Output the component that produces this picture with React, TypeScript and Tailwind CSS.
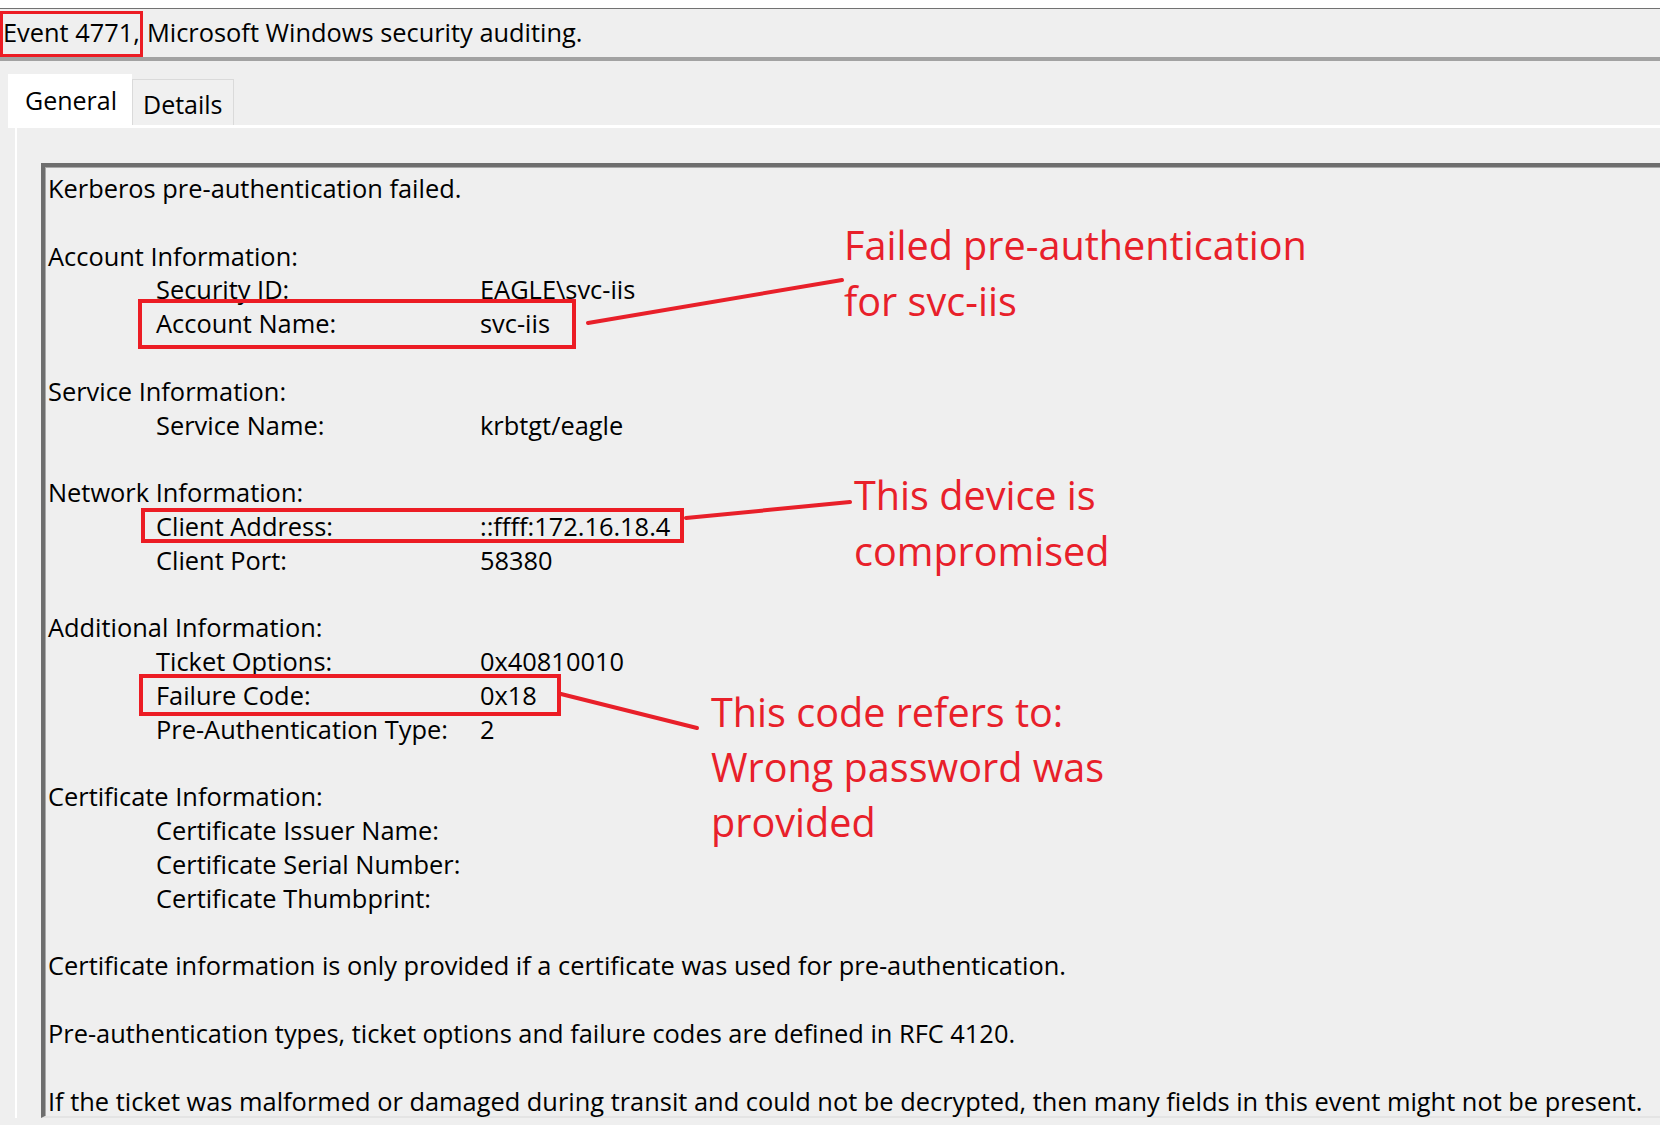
const red = '#ec1c24';

type Row = { label: string; value?: string };
type Section = { title: string; rows: Row[] };

const sections: Section[] = [
  { title: 'Account Information:', rows: [{ label: 'Security ID:', value: 'EAGLE\\svc-iis' }, { label: 'Account Name:', value: 'svc-iis' }] },
  { title: 'Service Information:', rows: [{ label: 'Service Name:', value: 'krbtgt/eagle' }] },
  { title: 'Network Information:', rows: [{ label: 'Client Address:', value: '::ffff:172.16.18.4' }, { label: 'Client Port:', value: '58380' }] },
  {
    title: 'Additional Information:',
    rows: [
      { label: 'Ticket Options:', value: '0x40810010' },
      { label: 'Failure Code:', value: '0x18' },
      { label: 'Pre-Authentication Type:', value: '2' },
    ],
  },
  {
    title: 'Certificate Information:',
    rows: [{ label: 'Certificate Issuer Name:' }, { label: 'Certificate Serial Number:' }, { label: 'Certificate Thumbprint:' }],
  },
];

const notes = [
  'Certificate information is only provided if a certificate was used for pre-authentication.',
  'Pre-authentication types, ticket options and failure codes are defined in RFC 4120.',
  'If the ticket was malformed or damaged during transit and could not be decrypted, then many fields in this event might not be present.',
];

function Line({ children }: { children?: React.ReactNode }) {
  return <div className="h-[33.8px] leading-[33.8px] whitespace-nowrap">{children}</div>;
}

function Annotations() {
  return (
    <div className="absolute inset-0 pointer-events-none">
      <svg className="absolute inset-0" width="1660" height="1125">
        <g stroke="#e8202a" strokeWidth="4" strokeLinecap="round">
          <line x1="588" y1="323" x2="842" y2="280" />
          <line x1="686" y1="518" x2="850" y2="502" />
          <line x1="561" y1="694" x2="697" y2="728" />
        </g>
      </svg>
      <div className="absolute left-[138px] top-[299px] w-[438px] h-[50px] border-4 border-[#ec1c24]" />
      <div className="absolute left-[141px] top-[508px] w-[543px] h-[35px] border-4 border-[#ec1c24]" />
      <div className="absolute left-[139px] top-[674px] w-[422px] h-[42px] border-4 border-[#ec1c24]" />

      <div className="absolute left-[844px] top-[217px] text-[39.6px] leading-[56px] text-[#e8202a]">
        <div>Failed pre-authentication</div>
        <div>for svc-iis</div>
      </div>
      <div className="absolute left-[854px] top-[467px] text-[39.6px] leading-[56px] text-[#e8202a]">
        <div>This device is</div>
        <div>compromised</div>
      </div>
      <div className="absolute left-[711px] top-[685px] text-[39.6px] leading-[55px] text-[#e8202a]">
        <div>This code refers to:</div>
        <div>Wrong password was</div>
        <div>provided</div>
      </div>
    </div>
  );
}

export default function App() {
  return (
    <div className="relative w-[1660px] h-[1125px] overflow-hidden bg-[#efefef] text-black font-['Open_Sans',sans-serif] text-[25.4px]">
      <div className="h-[8px] bg-white" />

      {/* title bar */}
      <div className="h-[53px] border-t border-[#727272] border-b-4 border-b-[#a2a2a2] pt-[2px]">
        <div className="flex h-[46px] items-stretch whitespace-nowrap">
          <span className="flex items-center border-[3px] pb-[3px]" style={{ borderColor: red }}>
            Event 4771,
          </span>
          <span className="flex items-center pl-[4px] pb-[3px]">Microsoft Windows security auditing.</span>
        </div>
      </div>

      {/* tabs */}
      <div className="h-[64px] flex items-end pl-[8px] text-[25px]">
        <div className="relative z-10 w-[124px] h-[54px] mb-[-3px] bg-white pl-[17px] pt-[10px] leading-[33.8px]">General</div>
        <div className="w-[102px] h-[46px] bg-[#f0f0f0] border border-b-0 border-[#dadada] pl-[10px] pt-[8px] leading-[33.8px]">
          Details
        </div>
      </div>

      {/* tab panel */}
      <div className="ml-[15px] border-l-2 border-t-[3px] border-white pt-[35px] pl-[24px]">
        <div className="w-[1700px] h-[955px] border-l-4 border-t-4 border-[#6e6e6e] border-b-2 border-b-[#e4e4e4] shadow-[inset_1px_1px_0_#a9a9a9] pl-[3px] pt-[5px]">
          <Line>Kerberos pre-authentication failed.</Line>
          <Line />
          {sections.map((s) => (
            <div key={s.title}>
              <Line>{s.title}</Line>
              {s.rows.map((r) => (
                <div key={r.label} className="grid grid-cols-[324px_1fr] pl-[108px]">
                  <Line>{r.label}</Line>
                  <Line>{r.value}</Line>
                </div>
              ))}
              <Line />
            </div>
          ))}
          {notes.map((n, i) => (
            <div key={i}>
              <Line>{n}</Line>
              {i < notes.length - 1 && <Line />}
            </div>
          ))}
        </div>
      </div>

      <Annotations />
    </div>
  );
}
